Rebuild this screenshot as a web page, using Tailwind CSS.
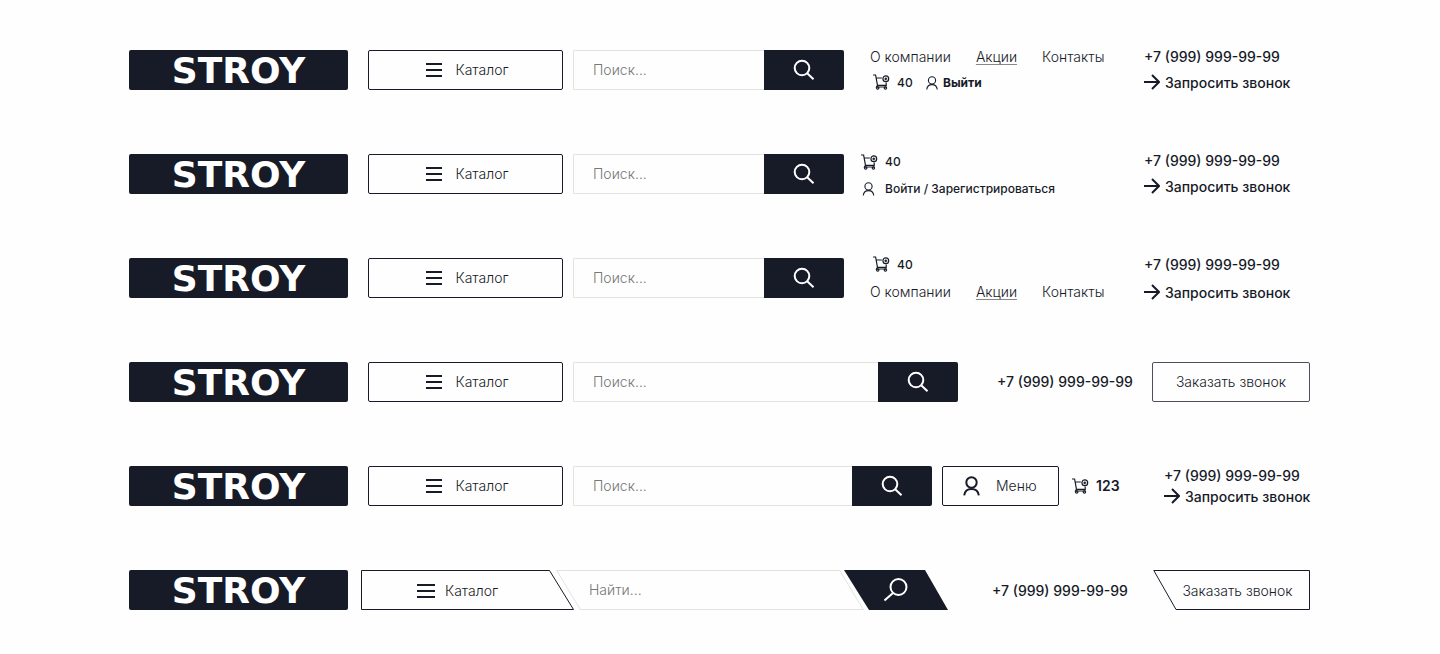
<!DOCTYPE html>
<html lang="ru">
<head>
<meta charset="utf-8">
<meta name="viewport" content="width=device-width, initial-scale=1">
<title>STROY</title>
<script src="https://cdn.jsdelivr.net/npm/@tailwindcss/browser@4"></script>
</head>
<body class="bg-[#fefefe] font-['Inter','Liberation_Sans',sans-serif] text-sm leading-[14px] text-[#171b28]">
<svg class="hidden">
  <symbol id="bars" viewBox="0 0 16 14"><path d="M0 1h16M0 7h16M0 13h16" stroke="currentColor" stroke-width="2"/></symbol>
  <symbol id="search" viewBox="0 0 22 22"><g fill="none" stroke="currentColor" stroke-width="2"><circle cx="9" cy="9" r="7.3"/><path d="M14.2 14.2l6.3 6.1"/></g></symbol>
  <symbol id="cart" viewBox="0 0 17 16"><g fill="none" stroke="currentColor" stroke-width="1.2"><path d="M0 1h2.600l1.900 10.300h8.700V8.500M3.200 4h5.600M4.500 11.300l-1 1.700h10.300"/><circle cx="4.700" cy="14" r="1.200"/><circle cx="12.400" cy="14" r="1.200"/><circle cx="12.800" cy="4.800" r="2.900"/><path d="M11.400 4.800h2.800M12.800 3.400v2.800"/></g></symbol>
  <symbol id="user" viewBox="0 0 12 14"><g fill="none" stroke="currentColor" stroke-width="1.1"><circle cx="6" cy="4.4" r="3.6"/><path d="M.7 13.5C1.200 10.200 3.200 8.600 6 8.600s4.800 1.600 5.300 4.900"/></g></symbol>
  <symbol id="user-bold" viewBox="0 0 17 20"><g fill="none" stroke="currentColor" stroke-width="2"><circle cx="8.500" cy="6.500" r="5.200"/><path d="M1.200 19.300c.6-4 3.300-6.300 7.300-6.300s6.700 2.300 7.300 6.300"/></g></symbol>
  <symbol id="arrow" viewBox="0 0 16 16"><path d="M0 8h15M8 1l7 7-7 7" fill="none" stroke="currentColor" stroke-width="2"/></symbol>
</svg>
<main class="flex flex-col gap-16 pt-[50px] pb-10 pl-[129px] pr-[130px]">

  <header class="flex h-10">
    <a href="#" class="flex w-[219px] shrink-0 items-center justify-center rounded-xs bg-[#171b28] pt-0.5 font-['DejaVu_Sans',sans-serif] text-4xl font-bold text-white">STROY</a>
    <button class="ml-5 flex w-[195px] shrink-0 items-center justify-center gap-[13px] rounded-xs border border-[#171b28] pl-1 font-light"><svg class="h-3.5 w-4"><use href="#bars"/></svg>Каталог</button>
    <form class="ml-2.5 flex min-w-0 flex-1">
      <input type="text" aria-label="Поиск" placeholder="Поиск..." class="min-w-0 flex-1 rounded-l-xs border border-r-0 border-[#e2e2e2] pb-0.5 pl-[19px] font-light placeholder:text-[#777]">
      <button type="button" aria-label="Искать" class="flex w-20 items-center justify-center rounded-r-xs bg-[#171b28] text-white"><svg class="size-[22px]"><use href="#search"/></svg></button>
    </form>
    <div class="flex w-[300px] shrink-0 flex-col gap-3 pl-[26px]">
      <nav class="flex gap-[25px] font-light"><a href="#">О компании</a><a href="#" class="underline decoration-[#888] underline-offset-2">Акции</a><a href="#">Контакты</a></nav>
      <div class="flex h-3.5 items-end pl-[3px] text-xs leading-[14px]">
        <a href="#" class="flex h-3.5 w-[53px] items-end gap-[7px] font-medium"><svg class="h-4 w-[17px]"><use href="#cart"/></svg>40</a>
        <a href="#" class="flex items-center gap-[5px] font-bold"><svg class="h-3.5 w-3"><use href="#user"/></svg>Выйти</a>
      </div>
    </div>
    <div class="flex w-[166px] shrink-0 flex-col gap-3 font-medium">
      <a href="tel:+79999999999">+7 (999) 999-99-99</a>
      <a href="#" class="flex h-3.5 items-end gap-[5px] whitespace-nowrap"><svg class="size-4 shrink-0"><use href="#arrow"/></svg>Запросить звонок</a>
    </div>
  </header>

  <header class="flex h-10">
    <a href="#" class="flex w-[219px] shrink-0 items-center justify-center rounded-xs bg-[#171b28] pt-0.5 font-['DejaVu_Sans',sans-serif] text-4xl font-bold text-white">STROY</a>
    <button class="ml-5 flex w-[195px] shrink-0 items-center justify-center gap-[13px] rounded-xs border border-[#171b28] pl-1 font-light"><svg class="h-3.5 w-4"><use href="#bars"/></svg>Каталог</button>
    <form class="ml-2.5 flex min-w-0 flex-1">
      <input type="text" aria-label="Поиск" placeholder="Поиск..." class="min-w-0 flex-1 rounded-l-xs border border-r-0 border-[#e2e2e2] pb-0.5 pl-[19px] font-light placeholder:text-[#777]">
      <button type="button" aria-label="Искать" class="flex w-20 items-center justify-center rounded-r-xs bg-[#171b28] text-white"><svg class="size-[22px]"><use href="#search"/></svg></button>
    </form>
    <div class="flex w-[300px] shrink-0 flex-col gap-3 pl-[17px] text-xs leading-[14px] font-medium">
      <a href="#" class="flex items-center gap-[7px]"><svg class="h-4 w-[17px]"><use href="#cart"/></svg>40</a>
      <a href="#" class="flex items-center"><svg class="mr-2.5 ml-px h-3.5 w-[13px]"><use href="#user"/></svg>Войти / Зарегистрироваться</a>
    </div>
    <div class="flex w-[166px] shrink-0 flex-col gap-3 font-medium">
      <a href="tel:+79999999999">+7 (999) 999-99-99</a>
      <a href="#" class="flex h-3.5 items-end gap-[5px] whitespace-nowrap"><svg class="size-4 shrink-0"><use href="#arrow"/></svg>Запросить звонок</a>
    </div>
  </header>

  <header class="flex h-10">
    <a href="#" class="flex w-[219px] shrink-0 items-center justify-center rounded-xs bg-[#171b28] pt-0.5 font-['DejaVu_Sans',sans-serif] text-4xl font-bold text-white">STROY</a>
    <button class="ml-5 flex w-[195px] shrink-0 items-center justify-center gap-[13px] rounded-xs border border-[#171b28] pl-1 font-light"><svg class="h-3.5 w-4"><use href="#bars"/></svg>Каталог</button>
    <form class="ml-2.5 flex min-w-0 flex-1">
      <input type="text" aria-label="Поиск" placeholder="Поиск..." class="min-w-0 flex-1 rounded-l-xs border border-r-0 border-[#e2e2e2] pb-0.5 pl-[19px] font-light placeholder:text-[#777]">
      <button type="button" aria-label="Искать" class="flex w-20 items-center justify-center rounded-r-xs bg-[#171b28] text-white"><svg class="size-[22px]"><use href="#search"/></svg></button>
    </form>
    <div class="flex w-[300px] shrink-0 flex-col gap-[13px] pl-[26px]">
      <a href="#" class="flex h-3.5 items-end gap-[7px] pl-[3px] text-xs leading-[14px] font-medium"><svg class="h-4 w-[17px]"><use href="#cart"/></svg>40</a>
      <nav class="flex gap-[25px] font-light"><a href="#">О компании</a><a href="#" class="underline decoration-[#888] underline-offset-2">Акции</a><a href="#">Контакты</a></nav>
    </div>
    <div class="flex w-[166px] shrink-0 flex-col gap-3.5 font-medium">
      <a href="tel:+79999999999">+7 (999) 999-99-99</a>
      <a href="#" class="flex h-3.5 items-end gap-[5px] whitespace-nowrap"><svg class="size-4 shrink-0"><use href="#arrow"/></svg>Запросить звонок</a>
    </div>
  </header>

  <header class="flex h-10">
    <a href="#" class="flex w-[219px] shrink-0 items-center justify-center rounded-xs bg-[#171b28] pt-0.5 font-['DejaVu_Sans',sans-serif] text-4xl font-bold text-white">STROY</a>
    <button class="ml-5 flex w-[195px] shrink-0 items-center justify-center gap-[13px] rounded-xs border border-[#171b28] pl-1 font-light"><svg class="h-3.5 w-4"><use href="#bars"/></svg>Каталог</button>
    <form class="ml-2.5 flex min-w-0 flex-1">
      <input type="text" aria-label="Поиск" placeholder="Поиск..." class="min-w-0 flex-1 rounded-l-xs border border-r-0 border-[#e2e2e2] pb-0.5 pl-[19px] font-light placeholder:text-[#777]">
      <button type="button" aria-label="Искать" class="flex w-20 items-center justify-center rounded-r-xs bg-[#171b28] text-white"><svg class="size-[22px]"><use href="#search"/></svg></button>
    </form>
    <a href="tel:+79999999999" class="flex w-[194px] shrink-0 items-center pl-[39px] font-medium whitespace-nowrap">+7 (999) 999-99-99</a>
    <button class="w-[158px] shrink-0 rounded-xs border border-[#4c4f59] font-light">Заказать звонок</button>
  </header>

  <header class="flex h-10">
    <a href="#" class="flex w-[219px] shrink-0 items-center justify-center rounded-xs bg-[#171b28] pt-0.5 font-['DejaVu_Sans',sans-serif] text-4xl font-bold text-white">STROY</a>
    <button class="ml-5 flex w-[195px] shrink-0 items-center justify-center gap-[13px] rounded-xs border border-[#171b28] pl-1 font-light"><svg class="h-3.5 w-4"><use href="#bars"/></svg>Каталог</button>
    <form class="ml-2.5 flex min-w-0 flex-1">
      <input type="text" aria-label="Поиск" placeholder="Поиск..." class="min-w-0 flex-1 rounded-l-xs border border-r-0 border-[#e2e2e2] pb-0.5 pl-[19px] font-light placeholder:text-[#777]">
      <button type="button" aria-label="Искать" class="flex w-20 items-center justify-center rounded-r-xs bg-[#171b28] text-white"><svg class="size-[22px]"><use href="#search"/></svg></button>
    </form>
    <button class="ml-2.5 flex w-[117px] shrink-0 items-center gap-4 rounded-xs border border-[#171b28] pl-5 font-light"><svg class="h-5 w-[17px]"><use href="#user-bold"/></svg>Меню</button>
    <a href="#" class="flex w-[105px] shrink-0 items-center gap-[7px] pl-[13px] font-semibold"><svg class="h-4 w-[17px]"><use href="#cart"/></svg>123</a>
    <div class="flex w-[146px] shrink-0 flex-col gap-[7px] pt-[3px] font-medium">
      <a href="tel:+79999999999">+7 (999) 999-99-99</a>
      <a href="#" class="flex h-3.5 items-end gap-[5px] whitespace-nowrap"><svg class="size-4 shrink-0"><use href="#arrow"/></svg>Запросить звонок</a>
    </div>
  </header>

  <header class="flex h-10">
    <a href="#" class="flex w-[219px] shrink-0 items-center justify-center rounded-xs bg-[#171b28] pt-0.5 font-['DejaVu_Sans',sans-serif] text-4xl font-bold text-white">STROY</a>
    <button class="relative ml-[13px] flex w-[213px] shrink-0 items-center gap-2.5 pl-14 pt-0.5 font-light">
      <svg class="absolute inset-0 h-10 w-[213px]" viewBox="0 0 213 40"><path d="M.5.5h188l24 39H.5z" fill="none" stroke="currentColor"/></svg>
      <svg class="h-3.5 w-[18px]" viewBox="0 0 16 14" preserveAspectRatio="none"><path d="M0 1h16M0 7h16M0 13h16" stroke="currentColor" stroke-width="2"/></svg>Каталог
    </button>
    <form class="flex min-w-0 flex-1">
      <div class="relative -ml-[18px] min-w-0 flex-1">
        <div class="absolute inset-x-3 inset-y-0 skew-x-[31deg] border border-[#e2e2e2]"></div>
        <input type="text" aria-label="Найти" placeholder="Найти..." class="relative h-10 w-full pl-[33px] pr-6 pb-0.5 font-light placeholder:text-[#777]">
      </div>
      <button type="button" aria-label="Искать" class="-ml-5 flex w-[104px] items-center justify-center bg-[#171b28] text-white [clip-path:polygon(0_0,81px_0,100%_100%,25px_100%)]"><svg class="size-6" viewBox="0 0 24 24" fill="none" stroke="currentColor" stroke-width="2"><circle cx="14.500" cy="9" r="8"/><path d="M9 15l-8.500 7.500"/></svg></button>
    </form>
    <a href="tel:+79999999999" class="flex w-[205px] shrink-0 items-center pl-11 pt-0.5 font-medium whitespace-nowrap">+7 (999) 999-99-99</a>
    <button class="relative w-[157px] shrink-0 pl-3 pt-0.5 font-light">
      <svg class="absolute inset-0 h-10 w-[157px]" viewBox="0 0 157 40"><path d="M.8.5h155.700v39H23z" fill="none" stroke="currentColor"/></svg>
      Заказать звонок
    </button>
  </header>
</main>
</body>
</html>
